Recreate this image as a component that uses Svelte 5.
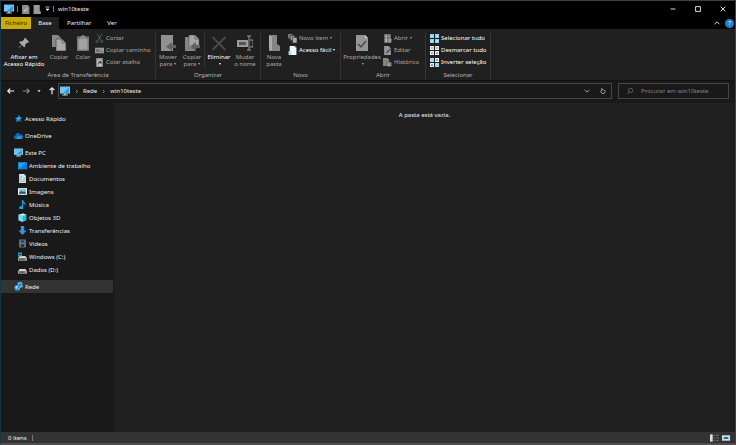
<script lang="ts">
	interface SmallAction {
		icon: string;
		label: string;
		on?: boolean;
		menu?: boolean;
	}

	const clipboard: SmallAction[] = [
		{ icon: 'cut', label: 'Cortar' },
		{ icon: 'path', label: 'Copiar caminho' },
		{ icon: 'shortcut', label: 'Colar atalho' },
	];
	const create: SmallAction[] = [
		{ icon: 'newitem', label: 'Novo item', menu: true },
		{ icon: 'easy', label: 'Acesso fácil', on: true, menu: true },
	];
	const open: SmallAction[] = [
		{ icon: 'open', label: 'Abrir', menu: true },
		{ icon: 'edit', label: 'Editar' },
		{ icon: 'history', label: 'Histórico' },
	];
	const select: SmallAction[] = [
		{ icon: 'selall', label: 'Selecionar tudo', on: true },
		{ icon: 'selnone', label: 'Desmarcar tudo', on: true },
		{ icon: 'selinv', label: 'Inverter seleção', on: true },
	];
	const tabs = ['Base', 'Partilhar', 'Ver'];

	const places = [
		{ icon: 'star', label: 'Acesso Rápido', root: true },
		{ icon: 'cloud', label: 'OneDrive', root: true },
		{ icon: 'pc', label: 'Este PC', root: true },
		{ icon: 'desktop', label: 'Ambiente de trabalho' },
		{ icon: 'docs', label: 'Documentos' },
		{ icon: 'images', label: 'Imagens' },
		{ icon: 'music', label: 'Música' },
		{ icon: 'cube', label: 'Objetos 3D' },
		{ icon: 'download', label: 'Transferências' },
		{ icon: 'video', label: 'Vídeos' },
		{ icon: 'windrive', label: 'Windows (C:)' },
		{ icon: 'drive', label: 'Dados (D:)' },
		{ icon: 'network', label: 'Rede', root: true },
	];

	let tab = $state('Base');
	let place = $state('Rede');
	let query = $state('');
</script>

{#snippet icon(name: string)}
	<svg class="icon" viewBox="0 0 16 16" aria-hidden="true">
		{#if name === 'pc'}
			<rect x="0" y="1" width="16" height="11" fill="#b8dff5" />
			<rect x="1" y="2" width="14" height="9" fill="#2a9ee4" />
			<path d="M1 2h14L5 11H1z" fill="#69c8f8" />
			<path d="M6.5 12h3v1.5h3V15h-9v-1.5h3z" fill="#a9c7d8" />
		{:else if name === 'page'}
			<path d="M2 0h10l3 3v13H2z" fill="#8e8e8e" />
			<path d="M5 9l2 2 4-5" fill="none" stroke="#eee" stroke-width="1.5" />
		{:else if name === 'newfolder'}
			<path d="M1 0h11v10l2 2v4H1z" fill="#999" />
			<path d="M11 2v9" stroke="#777" />
		{:else if name === 'pin'}
			<path d="M9.5 1L15 6.5l-1.5 1-1-.3-3 3 .2 2.3-1.5 1.2-3-3L1 15l-.5-.5 4.2-4.3-3-3L3 5.8l2.4.1 3-3-.3-1z" fill="#a2acb3" />
		{:else if name === 'copy'}
			<path d="M1 0h6l3 3v9H1z" fill="#898989" />
			<path d="M5 4h6l4 4v8H5z" fill="#aaa" stroke="#333" stroke-width=".6" />
			<path d="M11 4v4h4" fill="none" stroke="#666" />
		{:else if name === 'paste'}
			<path d="M2 1.5h4L7 0h2l1 1.5h4V16H2z" fill="#777" />
			<path d="M3.5 4h9v10.5h-9z" fill="#a2a2a2" />
			<path d="M5 1.5h6V4H5z" fill="#8d8d8d" />
		{:else if name === 'cut'}
			<path d="M4 0l6.5 11.5M12 0L5.5 11.5" stroke="#858585" fill="none" />
			<circle cx="4" cy="13.5" r="2" fill="none" stroke="#75818a" />
			<circle cx="12" cy="13.5" r="2" fill="none" stroke="#75818a" />
		{:else if name === 'path'}
			<path d="M0 3h16v10H0z" fill="#999" />
			<path d="M2 6l1.5 4L5 6l1.5 4L8 6M9 10h5" stroke="#444" fill="none" />
		{:else if name === 'shortcut'}
			<path d="M2 0h12v16H2z" fill="#909090" />
			<path d="M4 3h8v11H4z" fill="#ccc" />
			<path d="M6 12V9l3-2M6.5 6H11v4z" stroke="#333" fill="#333" />
		{:else if name === 'move' || name === 'copyto'}
			{#if name === 'move'}
				<path d="M1 0h12v16H1z" fill="#919191" />
			{:else}
				<path d="M1 2h7l3 3v11H1z" fill="#858585" />
				<path d="M5 0h6l4 4v9H5z" fill="#a6a6a6" stroke="#555" stroke-width=".5" />
				<path d="M11 0v4h4" fill="none" stroke="#666" />
			{/if}
			<path d="M16 10h-4V7l-6 4.5 6 4.5v-3h4z" fill="#626262" />
		{:else if name === 'delete'}
			<path d="M1.5 2l13 13M14.5 2l-13 13" stroke="#4c4c4c" stroke-width="1.8" />
		{:else if name === 'rename'}
			<path d="M0 5h11v7H0z" fill="#9b9b9b" />
			<path d="M2 7h7v3H2z" fill="#555" />
			<path d="M10 1h4M12 1v14M10 15h4M13 5h3v7h-3" fill="none" stroke="#999" />
		{:else if name === 'folder'}
			<path d="M3 0h8v9l3 2v5H3z" fill="#858585" />
			<path d="M3 0l3 2v14l-3-2z" fill="#aaa" />
		{:else if name === 'newitem'}
			<path d="M0 0h8v8H0z" fill="#777" />
			<path d="M4 3h8v8H4z" fill="#999" stroke="#333" />
			<path d="M8 6h8v10H8z" fill="#aaa" stroke="#333" />
		{:else if name === 'easy'}
			<path d="M3 0h9l3 3v13H3z" fill="#edf6fb" />
			<path d="M12 0v3h3" fill="#75b5d9" />
			<path d="M1 9h5v7H1z" fill="#b9d9e8" />
		{:else if name === 'props'}
			<path d="M2 0h9l3 3v13H2z" fill="#969696" />
			<path d="M11 0v3h3" fill="#c5c5c5" />
			<path d="M4 9l3 3 5-6" stroke="#494949" stroke-width="1.5" fill="none" />
		{:else if name === 'open'}
			<path d="M2 0h12v16H2z" fill="#707070" />
			<path d="M4 2h3v4H4zM4 8h3v6H4zM9 3h3v2H9z" fill="#bbb" />
			<path d="M9 8h6v7H9z" fill="#999" />
		{:else if name === 'edit'}
			<path d="M2 0h8l4 4v12H2z" fill="#999" />
			<path d="M5 14l1-4 7-6 2 2-7 6z" fill="#555" />
		{:else if name === 'history'}
			<path d="M0 0h8l3 3v11H0z" fill="#858585" />
			<circle cx="11" cy="11" r="4.5" fill="#aaa" stroke="#333" />
			<path d="M11 8v3h3" fill="none" stroke="#333" />
		{:else if name === 'selall'}
			<path d="M0 0h7v7H0zM9 0h7v7H9zM0 9h7v7H0zM9 9h7v7H9z" fill="#8ad3f6" />
			<path d="M2 2h3v3H2zM11 2h3v3h-3zM2 11h3v3H2zM11 11h3v3h-3z" fill="#c0e9fb" />
		{:else if name === 'selnone'}
			<path d="M1 1h5v5H1zM10 1h5v5h-5zM1 10h5v5H1zM10 10h5v5h-5z" fill="#999" stroke="#eee" stroke-width="2" />
		{:else if name === 'selinv'}
			<path d="M0 0h7v7H0zM9 9h7v7H9z" fill="#9bdcfa" />
			<path d="M10 1h5v5h-5zM1 10h5v5H1z" fill="#777" stroke="#e8f4fa" stroke-width="2" />
		{:else if name === 'star'}
			<path d="M9 1l1.5 4.5L15 6l-3.5 3.5L12.5 14 8.5 12 4 15l1-5-4-3 5-1z" fill="#1979bd" />
			<path d="M9 3l1 3 3 1-5 3-4 4 2-5-3-2 4-.5z" fill="#39acef" />
		{:else if name === 'cloud'}
			<path d="M3 14a3 3 0 0 1-.5-6A4.5 4.5 0 0 1 11 6a4 4 0 0 1 2 8z" fill="#1268b5" />
			<path d="M4 14c0-4 4-6 8-5a3 3 0 0 1 1 5z" fill="#2499e5" />
		{:else if name === 'desktop'}
			<rect y="2" width="16" height="13" fill="#0d79d5" />
			<path d="M1 3h14L2 14H1z" fill="#279ef0" />
		{:else if name === 'docs'}
			<path d="M2 0h9l3 3v13H2z" fill="#dcebf0" />
			<path d="M11 0v3h3" fill="#8db3c2" />
			<path d="M4 4h4M4 7h3M9 7h3M4 10h3M9 10h3M4 13h8" stroke="#52899e" />
		{:else if name === 'images'}
			<rect y="2" width="16" height="12" fill="#e3f0f7" />
			<path d="M2 4h12v8H2z" fill="#83b7d2" />
			<path d="M2 10l4-3 3 2 2-1 3 2v2H2z" fill="#31566a" />
		{:else if name === 'music'}
			<path d="M7 0h2c0 4 6 5 4 10-1-4-3-4-4-4v7a3.5 3 0 1 1-2-2z" fill="#1ba0e8" />
		{:else if name === 'cube'}
			<path d="M1 3l8-2 6 2v10l-7 3-7-3z" fill="#36b7cf" />
			<path d="M1 3l7 2v11l-7-3z" fill="#72dfed" />
			<path d="M1 3l8-2 6 2-7 2z" fill="#c4f6fa" />
		{:else if name === 'download'}
			<path d="M5 0h6v8h4l-7 8-7-8h4z" fill="#3b91e5" />
		{:else if name === 'video'}
			<path d="M2 1h12v14H2z" fill="#788796" />
			<path d="M5 2h6v5H5z" fill="#304d69" />
			<path d="M5 9h6v5H5z" fill="#29333e" />
			<path d="M3.5 2v13M12.5 2v13" stroke="#222" stroke-dasharray="1 1" />
		{:else if name === 'windrive' || name === 'drive'}
			<path d="M3 7h10l3 4v4H0v-4z" fill="#d6d6d6" />
			<path d="M1 11h14v3H1z" fill="#777" />
			<path d="M2 12h9v1H2z" fill="#222" />
			{#if name === 'windrive'}
				<path d="M0 1h3v3H0zM4 1h3v3H4zM0 5h3v3H0zM4 5h3v3H4z" fill="#35b2e9" />
			{/if}
		{:else if name === 'network'}
			<path d="M6 1l8-1 2 9-8 2z" fill="#5fc1f0" />
			<path d="M8 3l5-1 1 5-5 1z" fill="#288fca" />
			<circle cx="5.5" cy="10.5" r="5" fill="#2c91cc" />
			<path d="M2 8l4-2 1 3-3 4zM7 12l3-2-1 4z" fill="#98ddf5" />
		{/if}
	</svg>
{/snippet}

{#snippet big(name: string, first: string, second = '', menu = false, on = false)}
	<button class="big" class:on>
		{@render icon(name)}
		<span>{first}</span>
		<span>{second}{#if menu}<i class="caret"></i>{/if}</span>
	</button>
{/snippet}

{#snippet column(items: SmallAction[])}
	<div class="column">
		{#each items as item}
			<button class="small" class:on={item.on}>
				{@render icon(item.icon)}
				{item.label}
				{#if item.menu}<i class="caret"></i>{/if}
			</button>
		{/each}
	</div>
{/snippet}

{#snippet glyph(d: string)}
	<svg class="glyph" viewBox="0 0 10 10" aria-hidden="true"><path {d} /></svg>
{/snippet}

<div class="window">
	<header class="titlebar">
		<div class="quick">
			<span class="app-icon">{@render icon('pc')}</span>
			<i class="bar"></i>
			<button aria-label="Propriedades">{@render icon('page')}</button>
			<button aria-label="Nova pasta">{@render icon('newfolder')}</button>
			<button class="customize" aria-label="Personalizar">{@render glyph('M1 1h8M2 5l3 3 3-3z')}</button>
			<i class="bar"></i>
		</div>
		<span class="title">win10teste</span>
		<div class="controls">
			<button aria-label="Minimizar">{@render glyph('M1 5h8')}</button>
			<button aria-label="Maximizar">{@render glyph('M1 1h8v8H1z')}</button>
			<button aria-label="Fechar">{@render glyph('M1 1l8 8M9 1L1 9')}</button>
		</div>
	</header>

	<nav class="tabs">
		<button class="file">Ficheiro</button>
		{#each tabs as name}
			<button class:active={tab === name} onclick={() => (tab = name)}>{name}</button>
		{/each}
		<div class="tab-tools">
			<button aria-label="Minimizar o friso">{@render glyph('M1 7l4-4 4 4')}</button>
			<button class="help" aria-label="Ajuda">?</button>
		</div>
	</nav>

	<div class="ribbon">
		<section class="group clipboard">
			<div class="tools">
				{@render big('pin', 'Afixar em', 'Acesso Rápido', false, true)}
				{@render big('copy', 'Copiar')}
				{@render big('paste', 'Colar')}
				{@render column(clipboard)}
			</div>
			<h2>Área de Transferência</h2>
		</section>
		<section class="group organize">
			<div class="tools">
				{@render big('move', 'Mover', 'para', true)}
				{@render big('copyto', 'Copiar', 'para', true)}
				<i class="divider"></i>
				{@render big('delete', 'Eliminar', '', true, true)}
				{@render big('rename', 'Mudar', 'o nome')}
			</div>
			<h2>Organizar</h2>
		</section>
		<section class="group create">
			<div class="tools">
				{@render big('folder', 'Nova', 'pasta')}
				{@render column(create)}
			</div>
			<h2>Novo</h2>
		</section>
		<section class="group open">
			<div class="tools">
				{@render big('props', 'Propriedades', '', true)}
				{@render column(open)}
			</div>
			<h2>Abrir</h2>
		</section>
		<section class="group select">
			<div class="tools">{@render column(select)}</div>
			<h2>Selecionar</h2>
		</section>
	</div>

	<div class="navbar">
		<div class="arrows">
			<button aria-label="Retroceder">{@render glyph('M9 5H1M4 2L1 5l3 3')}</button>
			<button class="off" aria-label="Avançar">{@render glyph('M1 5h8M6 2l3 3-3 3')}</button>
			<button class="recent" aria-label="Localizações recentes">{@render glyph('M2 3l3 4 3-4')}</button>
			<button aria-label="Subir">{@render glyph('M5 9V1M2 4l3-3 3 3')}</button>
		</div>
		<div class="address">
			<span class="app-icon">{@render icon('pc')}</span>
			<span class="chevron">{@render glyph('M4 2l3 3-3 3')}</span>
			<button>Rede</button>
			<span class="chevron">{@render glyph('M4 2l3 3-3 3')}</span>
			<button>win10teste</button>
			<div class="address-tools">
				<button aria-label="Localizações anteriores">{@render glyph('M1 3l4 4 4-4')}</button>
				<button aria-label="Atualizar">{@render glyph('M3 3a3.5 3.5 0 1 0 4 0M3 0v3h3')}</button>
			</div>
		</div>
		<label class="search">
			<svg class="glyph lens" viewBox="0 0 10 10" aria-hidden="true">
				<circle cx="6" cy="4" r="3.5" />
				<path d="M3.5 6.5L0 10" />
			</svg>
			<input type="text" aria-label="Procurar" placeholder="Procurar em win10teste" bind:value={query} />
		</label>
	</div>

	<div class="body">
		<aside>
			{#each places as item}
				<button
					class="place"
					class:root={item.root}
					class:selected={place === item.label}
					onclick={() => (place = item.label)}
				>
					{@render icon(item.icon)}
					{item.label}
				</button>
			{/each}
		</aside>
		<main>A pasta está vazia.</main>
	</div>

	<footer>
		<span>0 itens</span>
		<i class="bar"></i>
		<div class="views">
			<button aria-label="Detalhes">
				<svg viewBox="0 0 10 8" aria-hidden="true">
					<path d="M0 0h3v8H0z" fill="#ddd" />
					<path d="M4 1h2M7 1h3M4 4h2M7 4h3M4 7h2M7 7h3" stroke="#777" />
				</svg>
			</button>
			<button aria-label="Ícones grandes">
				<svg viewBox="0 0 10 8" aria-hidden="true">
					<path d="M0 1h9v6H0z" fill="#bfe4f5" />
					<path d="M2 3h5v2H2z" fill="#34586c" />
				</svg>
			</button>
		</div>
	</footer>
</div>

<style>
	:global(body) {
		background: #202020;
	}

	.window {
		box-sizing: border-box;
		display: flex;
		flex-direction: column;
		min-height: 100vh;
		border: 1px solid #3c4144;
		border-left-color: #173641;
		border-bottom: 2px solid #504d4e;
		background: #191919;
		color: #f0f0f0;
		font: 6px/8px "Noto Sans", "Open Sans", sans-serif;
	}

	button {
		display: flex;
		align-items: center;
		margin: 0;
		padding: 0;
		border: 0;
		background: none;
		color: inherit;
		font: inherit;
		white-space: nowrap;
	}

	.icon {
		flex: none;
		width: 9px;
		height: 9px;
	}

	.glyph {
		flex: none;
		width: 6px;
		height: 6px;
		fill: none;
		stroke: currentColor;
		stroke-width: 1.5;
		overflow: visible;
	}

	.bar {
		width: 1px;
		height: 6px;
		background: #777;
	}

	.caret {
		display: inline-block;
		margin-left: 2px;
		border: 1px solid transparent;
		border-top: 2px solid currentColor;
		border-bottom: 0;
		vertical-align: middle;
	}

	.app-icon {
		display: flex;
	}

	.app-icon .icon {
		width: 10px;
		height: 10px;
	}

	.titlebar {
		display: flex;
		align-items: center;
		height: 16px;
		background: #000;
	}

	.quick {
		display: flex;
		align-items: center;
		gap: 3px;
		padding-left: 3px;
	}

	.quick .customize .glyph {
		width: 5px;
		fill: currentColor;
	}

	.title {
		padding-left: 4px;
	}

	.controls {
		display: flex;
		margin-left: auto;
	}

	.controls button {
		justify-content: center;
		width: 25px;
		height: 16px;
	}

	.tabs {
		display: flex;
		height: 12px;
		background: #000;
	}

	.tabs > button {
		justify-content: center;
		padding: 0 8px;
	}

	.tabs > .file {
		width: 30px;
		padding: 0;
		background: #c9ad05;
		color: #2a2400;
	}

	.tabs > .active {
		width: 28px;
		padding: 0;
		background: #202020;
	}

	.tab-tools {
		display: flex;
		align-items: center;
		gap: 5px;
		margin-left: auto;
		padding-right: 1px;
	}

	.tab-tools .help {
		justify-content: center;
		width: 9px;
		height: 9px;
		border-radius: 50%;
		background: #1c83d0;
		color: #fff;
	}

	.ribbon {
		display: flex;
		padding-top: 3px;
		border-bottom: 1px solid #121212;
		background: #202020;
	}

	.group {
		box-sizing: border-box;
		display: flex;
		flex-direction: column;
		border-right: 1px solid #343434;
		color: #aaa;
	}

	.group h2 {
		margin: 3px 0 1px;
		font: inherit;
		text-align: center;
		color: #b4b4b4;
	}

	.tools {
		display: flex;
		height: 36px;
	}

	.clipboard {
		width: 155px;
	}

	.organize {
		width: 105px;
	}

	.create {
		width: 80px;
	}

	.open {
		width: 85px;
	}

	.select {
		width: 65px;
	}

	.on {
		color: #fff;
	}

	.big {
		flex-direction: column;
		width: 24px;
		padding-top: 3px;
		line-height: 7px;
	}

	.big span {
		height: 7px;
	}

	.big .icon {
		width: 16px;
		height: 16px;
		margin-bottom: 3px;
	}

	.clipboard .big:first-child {
		width: 46px;
	}

	.clipboard .big:first-child .icon {
		width: 12px;
	}

	.organize .big:nth-of-type(3) {
		width: 28px;
	}

	.open .big {
		width: 42px;
	}

	.divider {
		width: 1px;
		background: #343434;
	}

	.column {
		display: flex;
		flex-direction: column;
	}

	.small {
		gap: 2px;
		height: 12px;
	}

	.small .caret {
		margin-left: 0;
	}

	.create .tools {
		padding-left: 1px;
	}

	.create .column {
		padding-left: 2px;
	}

	.select .tools {
		padding-left: 4px;
	}

	.navbar {
		display: flex;
		align-items: center;
		gap: 6px;
		height: 20px;
		padding: 0 6px 2px 0;
	}

	.arrows {
		display: flex;
		align-items: center;
		gap: 7px;
		padding-left: 6px;
	}

	.arrows .glyph {
		width: 8px;
		height: 8px;
	}

	.arrows .off {
		color: #888;
	}

	.arrows .recent .glyph {
		width: 4px;
		height: 4px;
		fill: currentColor;
	}

	.address,
	.search {
		box-sizing: border-box;
		display: flex;
		align-items: center;
		height: 16px;
		border: 1px solid #464646;
	}

	.address {
		flex: 1;
		gap: 4px;
		padding-left: 1px;
		margin-left: -4px;
	}

	.chevron {
		display: flex;
		color: #aaa;
	}

	.chevron .glyph {
		width: 5px;
		height: 5px;
	}

	.address-tools {
		display: flex;
		gap: 10px;
		margin-left: auto;
		padding-right: 5px;
		color: #aaa;
	}

	.search {
		gap: 8px;
		width: 15%;
		min-width: 111px;
		padding-left: 8px;
		color: #888;
	}

	.lens {
		stroke-width: 1;
	}

	.search input {
		flex: 1;
		min-width: 0;
		padding: 0;
		border: 0;
		outline: 0;
		background: none;
		color: #ddd;
		font: inherit;
	}

	.search input::placeholder {
		color: #858585;
	}

	.body {
		display: flex;
		flex: 1;
	}

	aside {
		width: 113px;
		padding-top: 5px;
	}

	.place {
		gap: 2px;
		width: 112px;
		height: 13px;
		padding-left: 17px;
	}

	.place.root {
		margin-top: 4px;
		padding-left: 13px;
	}

	.place.selected {
		background: #333;
	}

	main {
		flex: 1;
		padding-top: 8px;
		background: #202020;
		text-align: center;
	}

	footer {
		display: flex;
		align-items: center;
		gap: 5px;
		height: 11px;
		padding: 0 4px 0 7px;
		background: #333;
	}

	.views {
		display: flex;
		gap: 3px;
		margin-left: auto;
	}

	.views svg {
		width: 9px;
		height: 8px;
	}
</style>
